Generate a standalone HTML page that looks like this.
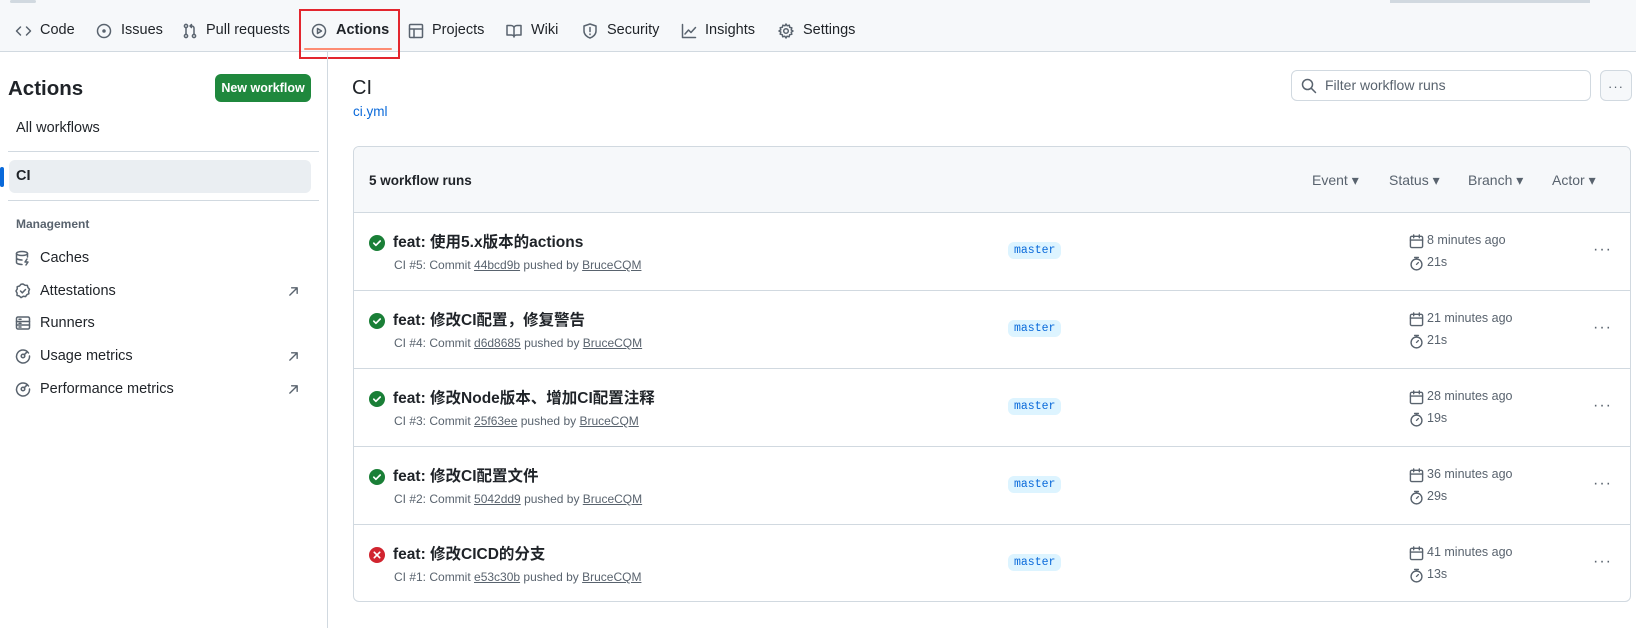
<!DOCTYPE html>
<html><head><meta charset="utf-8"><style>
*{box-sizing:border-box;margin:0;padding:0}
body{width:1636px;height:628px;overflow:hidden;background:#fff;font-family:"Liberation Sans","Noto Sans CJK SC",sans-serif;color:#1f2328;position:relative;font-size:14.5px}
.a{position:absolute;white-space:nowrap}
svg{fill:none;stroke:#59636e;stroke-width:1.5;stroke-linecap:round;stroke-linejoin:round}
.top{position:absolute;left:0;top:0;width:1636px;height:52px;background:#f6f8fa;border-bottom:1px solid #d1d9e0}
.nav{top:22px;font-size:14.5px;color:#1f2328}
.side{position:absolute;left:327px;top:52px;width:1px;height:576px;background:#d1d9e0}
.btn{left:215px;top:74px;width:96px;height:28px;background:#1f883d;color:#fff;border-radius:6px;font-weight:bold;font-size:12.5px;text-align:center;line-height:28px}
.mi{left:40px;font-size:14.5px}
.ic{position:absolute;left:15px}
.box{position:absolute;left:353px;top:146px;width:1278px;height:456px;border:1px solid #d1d9e0;border-radius:6px;overflow:hidden}
.hd{position:absolute;left:0;top:0;right:0;height:66px;background:#f6f8fa;border-bottom:1px solid #d1d9e0}
.row{position:absolute;left:0;right:0;height:78px;border-bottom:1px solid #d1d9e0}
.row:last-child{border-bottom:none}
.t{left:39px;top:17px;font-weight:bold;font-size:15.5px}
.s{left:40px;top:45px;font-size:12px;color:#59636e}
.s u{text-decoration:underline}
.br{left:654px;top:29px;background:#ddf4ff;color:#0969da;font-family:"Liberation Mono",monospace;font-size:11.5px;padding:2px 6px;border-radius:6px}
.tm{left:1073px;top:20px;font-size:12.5px;color:#59636e}
.du{left:1073px;top:42px;font-size:12.5px;color:#59636e}
.dt{left:1239px;top:28px;font-size:16px;color:#59636e;letter-spacing:1px}
.f{top:25px;font-size:14px;color:#59636e}
</style></head><body>
<div class="top"></div>
<div class="a" style="left:10px;top:0;width:26px;height:3px;background:#d1d9e0;border-radius:2px"></div>
<div class="a" style="left:1390px;top:0;width:200px;height:3px;background:#d1d9e0"></div>
<!-- nav -->
<svg class="a" style="left:15px;top:23px" width="17" height="16" viewBox="0 0 16 16"><path d="M5 4L1 8l4 4M11 4l4 4-4 4"/></svg>
<div class="a nav" style="left:40px">Code</div>
<svg class="a" style="left:96px;top:23px" width="16" height="16" viewBox="0 0 16 16"><circle cx="8" cy="8" r="6.5"/><circle cx="8" cy="8" r="1" fill="#59636e"/></svg>
<div class="a nav" style="left:121px">Issues</div>
<svg class="a" style="left:182px;top:23px" width="16" height="16" viewBox="0 0 16 16"><circle cx="4" cy="3" r="1.6"/><circle cx="4" cy="13" r="1.6"/><circle cx="12" cy="13" r="1.6"/><path d="M4 5v6M12 11V5c0-1-1-2-2-2H8M9.5 1.5L8 3l1.5 1.5"/></svg>
<div class="a nav" style="left:206px">Pull requests</div>
<svg class="a" style="left:311px;top:23px" width="16" height="16" viewBox="0 0 16 16"><circle cx="8" cy="8" r="6.5"/><path d="M6.5 5.5v5l4-2.5z"/></svg>
<div class="a nav" style="left:336px;font-weight:bold">Actions</div>
<div class="a" style="left:304px;top:48px;width:88px;height:2px;background:#fd8c73;border-radius:2px"></div>
<div class="a" style="left:299px;top:9px;width:101px;height:50px;border:2px solid #e3262e"></div>
<svg class="a" style="left:408px;top:23px" width="16" height="16" viewBox="0 0 16 16"><rect x="1.5" y="1.5" width="13" height="13" rx="1"/><path d="M1.5 6h13M6 6v8.5"/></svg>
<div class="a nav" style="left:432px">Projects</div>
<svg class="a" style="left:506px;top:23px" width="16" height="16" viewBox="0 0 16 16"><path d="M1 2.5h4c1.5 0 3 1 3 2.5v9c0-1-1-2-2.5-2H1zM15 2.5h-4C9.5 2.5 8 3.5 8 5v9c0-1 1-2 2.5-2H15z"/></svg>
<div class="a nav" style="left:531px">Wiki</div>
<svg class="a" style="left:582px;top:23px" width="16" height="16" viewBox="0 0 16 16"><path d="M8 1l6 2v5c0 3.5-3 6-6 7-3-1-6-3.5-6-7V3z"/><path d="M8 4.5v4M8 11v.5"/></svg>
<div class="a nav" style="left:607px">Security</div>
<svg class="a" style="left:681px;top:23px" width="16" height="16" viewBox="0 0 16 16"><path d="M1.5 1.5v13h13M4 11l3.5-4 2.5 2.5 4.5-5"/></svg>
<div class="a nav" style="left:705px">Insights</div>
<svg class="a" style="left:778px;top:23px" width="16" height="16" viewBox="0 0 16 16"><circle cx="8" cy="8" r="2.3"/><path d="M8 1l1.2 1.8 2.1-.6.4 2.1 2.1.6-.6 2.1L15 8l-1.8 1.2.6 2.1-2.1.4-.6 2.1-2.1-.6L8 15l-1.2-1.8-2.1.6-.4-2.1-2.1-.6.6-2.1L1 8l1.8-1.2-.6-2.1 2.1-.4.6-2.1 2.1.6z"/></svg>
<div class="a nav" style="left:803px">Settings</div>

<div class="side"></div>
<!-- sidebar -->
<div class="a" style="left:8px;top:77px;font-size:20.5px;font-weight:bold">Actions</div>
<div class="a btn">New workflow</div>
<div class="a" style="left:16px;top:120px">All workflows</div>
<div class="a" style="left:8px;top:151px;width:311px;height:1px;background:#d1d9e0"></div>
<div class="a" style="left:9px;top:160px;width:302px;height:33px;background:#eaeef2;border-radius:6px"></div>
<div class="a" style="left:0;top:167px;width:4px;height:20px;background:#0969da;border-radius:2px"></div>
<div class="a" style="left:16px;top:168px;font-weight:bold">CI</div>
<div class="a" style="left:8px;top:200px;width:311px;height:1px;background:#d1d9e0"></div>
<div class="a" style="left:16px;top:217px;font-size:12px;color:#59636e;font-weight:bold">Management</div>
<svg class="ic" style="top:250px" width="16" height="16" viewBox="0 0 16 16"><ellipse cx="7" cy="3.5" rx="5.5" ry="2"/><path d="M1.5 3.5v9c0 1 2.5 2 5.5 2M1.5 8c0 1 2.5 2 5.5 2M12.5 3.5V7M12 9l-2 3h3l-2 3"/></svg>
<div class="a mi" style="top:250px">Caches</div>
<svg class="ic" style="top:283px" width="16" height="16" viewBox="0 0 16 16"><path d="M8 1l2 1.3 2.3.1.7 2.2 1.5 1.7-.9 2.1.3 2.3-2 1-1.3 1.9-2.3-.3L6 14.6 4.3 13l-2.3-.6.1-2.3L1 8l1.2-2 0-2.3L4.5 3 6 1.3z"/><path d="M5.5 8l1.8 1.8L10.5 6.5"/></svg>
<div class="a mi" style="top:283px">Attestations</div>
<svg class="a" style="left:288px;top:286px" width="11" height="11" viewBox="0 0 12 12"><path d="M2 10l8-8M4 2h6v6"/></svg>
<svg class="ic" style="top:315px" width="16" height="16" viewBox="0 0 16 16"><rect x="1.5" y="2" width="13" height="12" rx="1.5"/><path d="M1.5 6.5h13M1.5 10h13M4 4.3h2M4 8.3h2M4 12h2"/></svg>
<div class="a mi" style="top:315px">Runners</div>
<svg class="ic" style="top:348px" width="16" height="16" viewBox="0 0 16 16"><path d="M13.5 5A6.5 6.5 0 1 0 14.5 8"/><circle cx="8" cy="8" r="1.8"/><path d="M9.3 6.7l3-3"/></svg>
<div class="a mi" style="top:348px">Usage metrics</div>
<svg class="a" style="left:288px;top:351px" width="11" height="11" viewBox="0 0 12 12"><path d="M2 10l8-8M4 2h6v6"/></svg>
<svg class="ic" style="top:381px" width="16" height="16" viewBox="0 0 16 16"><path d="M13.5 5A6.5 6.5 0 1 0 14.5 8"/><circle cx="8" cy="8" r="1.8"/><path d="M9.3 6.7l3-3"/></svg>
<div class="a mi" style="top:381px">Performance metrics</div>
<svg class="a" style="left:288px;top:384px" width="11" height="11" viewBox="0 0 12 12"><path d="M2 10l8-8M4 2h6v6"/></svg>

<!-- main -->
<div class="a" style="left:352px;top:77px;font-size:20px">CI</div>
<div class="a" style="left:353px;top:104px;color:#0969da;font-size:13.5px">ci.yml</div>
<div class="a" style="left:1291px;top:70px;width:300px;height:31px;border:1px solid #d1d9e0;border-radius:6px"></div>
<svg class="a" style="left:1301px;top:78px" width="16" height="16" viewBox="0 0 16 16"><circle cx="6.5" cy="6.5" r="5"/><path d="M10.2 10.2L14.5 14.5"/></svg>
<div class="a" style="left:1325px;top:77px;color:#59636e;font-size:14px">Filter workflow runs</div>
<div class="a" style="left:1600px;top:70px;width:32px;height:31px;border:1px solid #d1d9e0;border-radius:6px;background:#f6f8fa;text-align:center;color:#59636e;font-size:13px;line-height:31px;letter-spacing:1px">···</div>

<div class="box">
 <div class="hd">
  <div class="a" style="left:15px;top:26px;font-size:13.5px;font-weight:bold">5 workflow runs</div>
  <div class="a f" style="left:958px">Event ▾</div>
  <div class="a f" style="left:1035px">Status ▾</div>
  <div class="a f" style="left:1114px">Branch ▾</div>
  <div class="a f" style="left:1198px">Actor ▾</div>
 </div>
 <div class="row" style="top:66px">
  <svg class="a" style="left:15px;top:22px" width="16" height="16" viewBox="0 0 16 16"><circle cx="8" cy="8" r="8" fill="#1a7f37" stroke="none"/><path d="M4.8 8.2l2.1 2.1 4.3-4.3" stroke="#fff" stroke-width="1.7"/></svg>
  <div class="a t">feat: 使用5.x版本的actions</div>
  <div class="a s">CI #5: Commit <u>44bcd9b</u> pushed by <u>BruceCQM</u></div>
  <div class="a br">master</div>
  <svg class="a" style="left:1055px;top:21px" width="15" height="15" viewBox="0 0 16 16"><rect x="1.5" y="2.5" width="13" height="12" rx="1.5"/><path d="M1.5 6.5h13M5 1v3M11 1v3"/></svg>
  <div class="a tm">8 minutes ago</div>
  <svg class="a" style="left:1055px;top:43px" width="15" height="15" viewBox="0 0 16 16"><circle cx="8" cy="9" r="5.8"/><path d="M6 1.5h4M8 1.5v1.7M8 9l2-2"/></svg>
  <div class="a du">21s</div>
  <div class="a dt">···</div>
 </div>
 <div class="row" style="top:144px">
  <svg class="a" style="left:15px;top:22px" width="16" height="16" viewBox="0 0 16 16"><circle cx="8" cy="8" r="8" fill="#1a7f37" stroke="none"/><path d="M4.8 8.2l2.1 2.1 4.3-4.3" stroke="#fff" stroke-width="1.7"/></svg>
  <div class="a t">feat: 修改CI配置，修复警告</div>
  <div class="a s">CI #4: Commit <u>d6d8685</u> pushed by <u>BruceCQM</u></div>
  <div class="a br">master</div>
  <svg class="a" style="left:1055px;top:21px" width="15" height="15" viewBox="0 0 16 16"><rect x="1.5" y="2.5" width="13" height="12" rx="1.5"/><path d="M1.5 6.5h13M5 1v3M11 1v3"/></svg>
  <div class="a tm">21 minutes ago</div>
  <svg class="a" style="left:1055px;top:43px" width="15" height="15" viewBox="0 0 16 16"><circle cx="8" cy="9" r="5.8"/><path d="M6 1.5h4M8 1.5v1.7M8 9l2-2"/></svg>
  <div class="a du">21s</div>
  <div class="a dt">···</div>
 </div>
 <div class="row" style="top:222px">
  <svg class="a" style="left:15px;top:22px" width="16" height="16" viewBox="0 0 16 16"><circle cx="8" cy="8" r="8" fill="#1a7f37" stroke="none"/><path d="M4.8 8.2l2.1 2.1 4.3-4.3" stroke="#fff" stroke-width="1.7"/></svg>
  <div class="a t">feat: 修改Node版本、增加CI配置注释</div>
  <div class="a s">CI #3: Commit <u>25f63ee</u> pushed by <u>BruceCQM</u></div>
  <div class="a br">master</div>
  <svg class="a" style="left:1055px;top:21px" width="15" height="15" viewBox="0 0 16 16"><rect x="1.5" y="2.5" width="13" height="12" rx="1.5"/><path d="M1.5 6.5h13M5 1v3M11 1v3"/></svg>
  <div class="a tm">28 minutes ago</div>
  <svg class="a" style="left:1055px;top:43px" width="15" height="15" viewBox="0 0 16 16"><circle cx="8" cy="9" r="5.8"/><path d="M6 1.5h4M8 1.5v1.7M8 9l2-2"/></svg>
  <div class="a du">19s</div>
  <div class="a dt">···</div>
 </div>
 <div class="row" style="top:300px">
  <svg class="a" style="left:15px;top:22px" width="16" height="16" viewBox="0 0 16 16"><circle cx="8" cy="8" r="8" fill="#1a7f37" stroke="none"/><path d="M4.8 8.2l2.1 2.1 4.3-4.3" stroke="#fff" stroke-width="1.7"/></svg>
  <div class="a t">feat: 修改CI配置文件</div>
  <div class="a s">CI #2: Commit <u>5042dd9</u> pushed by <u>BruceCQM</u></div>
  <div class="a br">master</div>
  <svg class="a" style="left:1055px;top:21px" width="15" height="15" viewBox="0 0 16 16"><rect x="1.5" y="2.5" width="13" height="12" rx="1.5"/><path d="M1.5 6.5h13M5 1v3M11 1v3"/></svg>
  <div class="a tm">36 minutes ago</div>
  <svg class="a" style="left:1055px;top:43px" width="15" height="15" viewBox="0 0 16 16"><circle cx="8" cy="9" r="5.8"/><path d="M6 1.5h4M8 1.5v1.7M8 9l2-2"/></svg>
  <div class="a du">29s</div>
  <div class="a dt">···</div>
 </div>
 <div class="row" style="top:378px">
  <svg class="a" style="left:15px;top:22px" width="16" height="16" viewBox="0 0 16 16"><circle cx="8" cy="8" r="8" fill="#d1242f" stroke="none"/><path d="M5.3 5.3l5.4 5.4M10.7 5.3l-5.4 5.4" stroke="#fff" stroke-width="1.7"/></svg>
  <div class="a t">feat: 修改CICD的分支</div>
  <div class="a s">CI #1: Commit <u>e53c30b</u> pushed by <u>BruceCQM</u></div>
  <div class="a br">master</div>
  <svg class="a" style="left:1055px;top:21px" width="15" height="15" viewBox="0 0 16 16"><rect x="1.5" y="2.5" width="13" height="12" rx="1.5"/><path d="M1.5 6.5h13M5 1v3M11 1v3"/></svg>
  <div class="a tm">41 minutes ago</div>
  <svg class="a" style="left:1055px;top:43px" width="15" height="15" viewBox="0 0 16 16"><circle cx="8" cy="9" r="5.8"/><path d="M6 1.5h4M8 1.5v1.7M8 9l2-2"/></svg>
  <div class="a du">13s</div>
  <div class="a dt">···</div>
 </div>
</div>
</body></html>
